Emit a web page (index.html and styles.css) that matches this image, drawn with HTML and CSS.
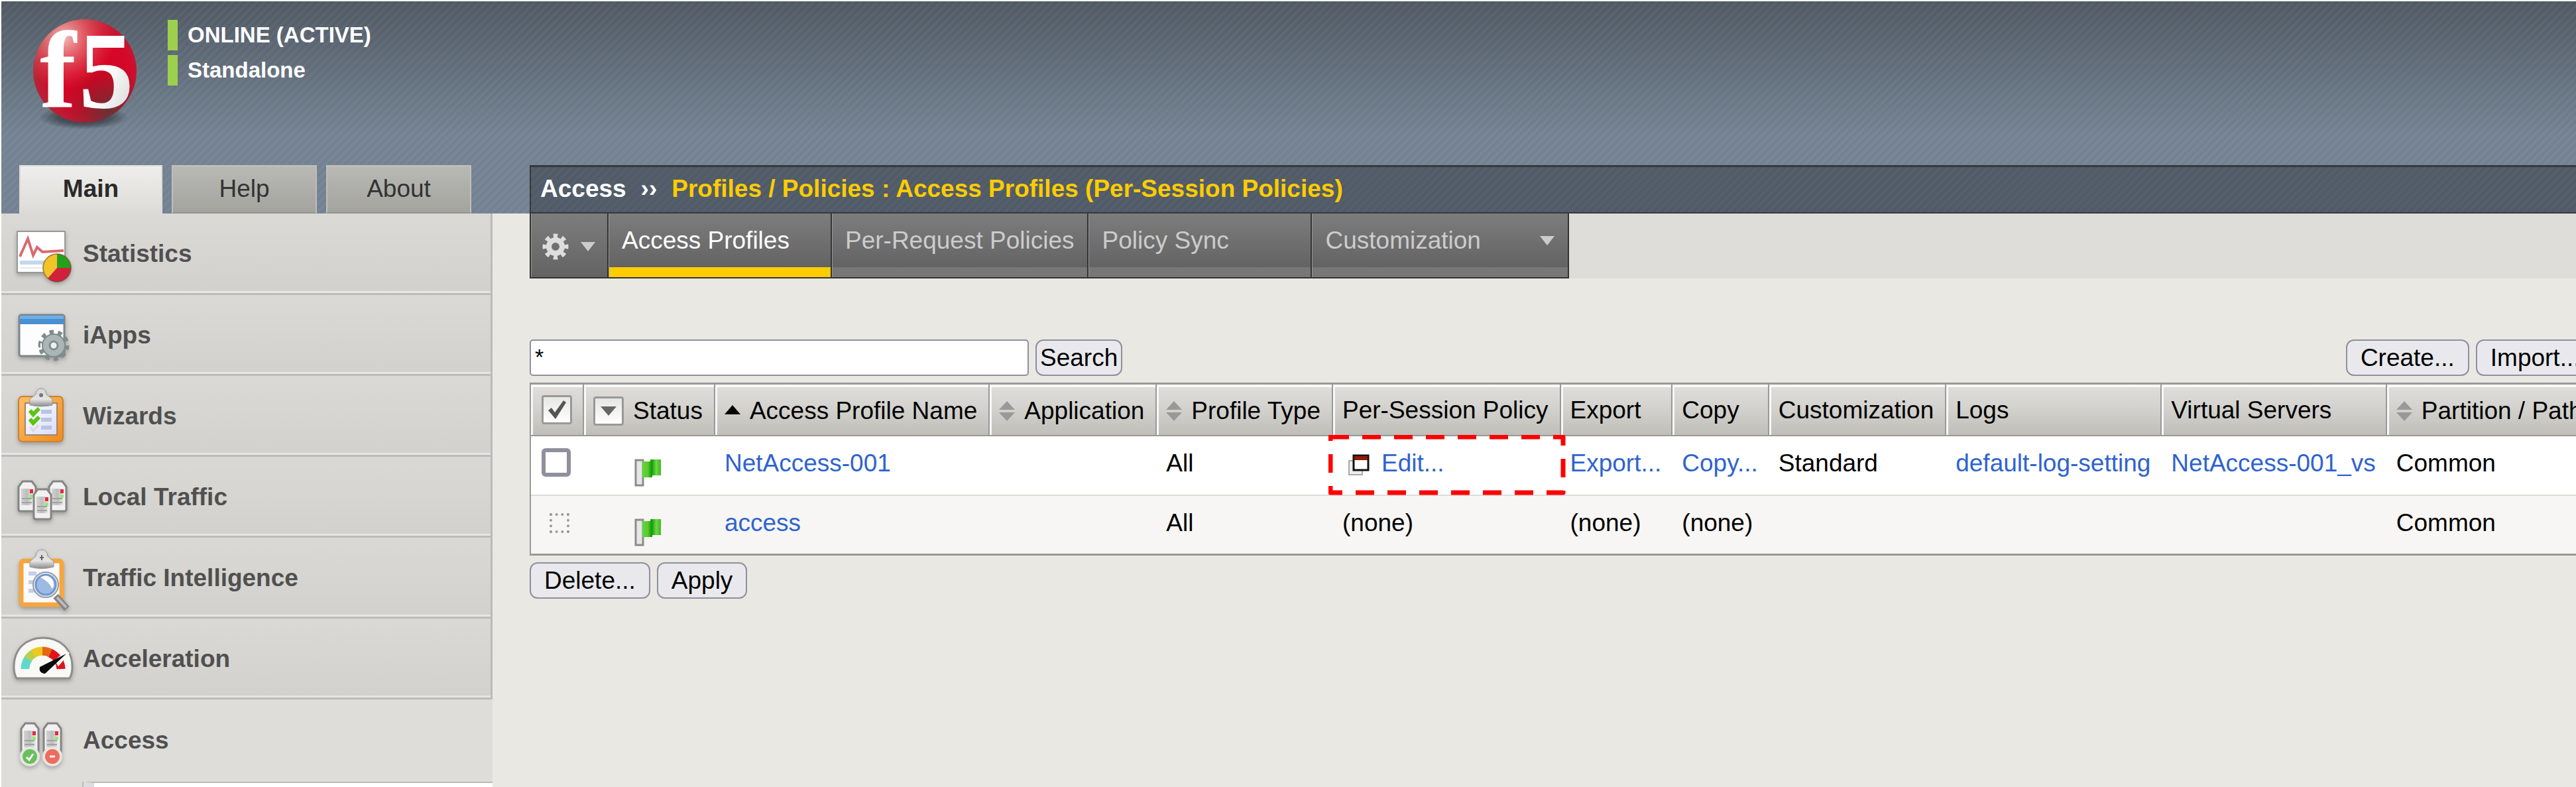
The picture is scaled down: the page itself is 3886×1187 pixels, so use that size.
FILE: index.html
```html
<!DOCTYPE html>
<html lang="en">
<head>
<meta charset="utf-8">
<title>Access Profiles</title>
<link rel="stylesheet" href="styles.css">
</head>
<body>
<svg class="defs" width="0" height="0" aria-hidden="true">
  <defs>
    <linearGradient id="metal" x1="0" y1="0" x2="1" y2="0">
      <stop offset="0" stop-color="#d2d2d2"/><stop offset=".5" stop-color="#bdbdbd"/><stop offset="1" stop-color="#ececec"/>
    </linearGradient>
    <linearGradient id="clip" x1="0" y1="0" x2="0" y2="1">
      <stop offset="0" stop-color="#d8d8d8"/><stop offset=".6" stop-color="#e4e4e4"/><stop offset="1" stop-color="#8a8a8a"/>
    </linearGradient>
    <linearGradient id="board" x1="0" y1="0" x2="1" y2="1">
      <stop offset="0" stop-color="#ffbf66"/><stop offset="1" stop-color="#f28a1c"/>
    </linearGradient>
    <linearGradient id="sheet" x1="0" y1="0" x2="1" y2="1">
      <stop offset="0" stop-color="#ffffff"/><stop offset="1" stop-color="#d9dcfa"/>
    </linearGradient>
    <linearGradient id="flagfill" x1="0" y1="0" x2="1" y2="0">
      <stop offset="0" stop-color="#5fd83a"/><stop offset=".3" stop-color="#5cc92f"/><stop offset=".5" stop-color="#0f9b0a"/><stop offset=".75" stop-color="#6fd840"/><stop offset="1" stop-color="#3fb52a"/>
    </linearGradient>
    <g id="server">
      <path d="M2 44V10L8 2h14l6 8v34q0 3-3 3H5q-3 0-3-3z" fill="#f1f1f1" stroke="#858585" stroke-width="3"/>
      <path d="M6 13h18v25H6z" fill="url(#metal)"/>
      <path d="M7 28h15M7 34h15" stroke="#a2a2a2" stroke-width="2"/>
      <path d="M19 14h5v6h-5z" fill="#e8283c"/><path d="M19 22h5v5h-5z" fill="#90ee70"/>
    </g>
    <g id="flag">
      <path d="M2 2h11v38H2z" fill="#e6e6e6" stroke="#8c8c8c" stroke-width="3"/>
      <path d="M12 4h12V1h16v24H27v3H12z" fill="url(#flagfill)"/>
    </g>
    <g id="sort">
      <path d="M12 0l12 13H0zM0 17h24L12 30z" fill="#999"/>
    </g>
  </defs>
</svg>

<header class="top">
  <div class="brand">
    <svg class="logo" width="180" height="180" viewBox="0 0 180 180" role="img" aria-label="f5">
      <defs>
        <radialGradient id="ball" cx=".55" cy=".5" r=".6" fx=".55" fy=".55">
          <stop offset="0" stop-color="#d8001f"/><stop offset=".65" stop-color="#d4082a"/><stop offset="1" stop-color="#a8303a"/>
        </radialGradient>
        <radialGradient id="shine" cx=".3" cy=".18" r=".5">
          <stop offset="0" stop-color="#f6c4be" stop-opacity=".95"/><stop offset="1" stop-color="#e05050" stop-opacity="0"/>
        </radialGradient>
        <radialGradient id="shade" cx=".72" cy=".88" r=".45">
          <stop offset="0" stop-color="#543a38" stop-opacity=".85"/><stop offset="1" stop-color="#8a2028" stop-opacity="0"/>
        </radialGradient>
        <radialGradient id="floor">
          <stop offset="0" stop-color="#222a32" stop-opacity=".9"/><stop offset=".6" stop-color="#2c353e" stop-opacity=".6"/><stop offset="1" stop-color="#333" stop-opacity="0"/>
        </radialGradient>
        <linearGradient id="ink" x1="0" y1="0" x2="1" y2="1">
          <stop offset=".5" stop-color="#fff"/><stop offset="1" stop-color="#cfcfcf"/>
        </linearGradient>
      </defs>
      <ellipse cx="90" cy="147" rx="68" ry="18" fill="url(#floor)"/>
      <circle cx="92" cy="77" r="78" fill="url(#ball)"/>
      <circle cx="92" cy="77" r="78" fill="url(#shine)"/>
      <circle cx="92" cy="77" r="78" fill="url(#shade)"/>
      <text class="logo-text" x="24" y="132">f</text>
      <text class="logo-text" x="83" y="132" fill="url(#ink)">5</text>
    </svg>
    <div class="state">
      <p>ONLINE (ACTIVE)</p>
      <p>Standalone</p>
    </div>
  </div>
  <div class="bar">
    <nav class="maintabs" aria-label="Sections">
      <a class="on" href="#main">Main</a>
      <a href="#help">Help</a>
      <a href="#about">About</a>
    </nav>
    <div class="crumbs"><a href="#access">Access</a><span>››</span><strong>Profiles / Policies : Access Profiles (Per-Session Policies)</strong></div>
  </div>
</header>

<div class="body">
  <nav class="side" aria-label="Main menu">
    <a class="item" href="#statistics">
      <svg width="96" height="100" viewBox="0 0 96 100">
        <path d="M8 16h72v62H8z" fill="#fff" stroke="#999" stroke-width="2"/>
        <path d="M12 60h66v6H12z" fill="#c3d9ec"/><path d="M12 70h60v2H12z" fill="#e2eaf2"/>
        <path d="M12 54L24 27l8 25 6-12 8 7 32-2" fill="none" stroke="#d96a70" stroke-width="4"/>
        <circle cx="68" cy="71" r="21" fill="#d0203c"/>
        <path d="M68 71V50a21 21 0 0 1 21 21z" fill="#25a01c"/>
        <path d="M68 71V50a21 21 0 0 0-14 37z" fill="#f3c32c"/>
        <circle cx="68" cy="71" r="21" fill="none" stroke="#6a4a20" stroke-opacity=".5" stroke-width="2"/>
      </svg>
      <span>Statistics</span>
    </a>
    <a class="item" href="#iapps">
      <svg width="96" height="100" viewBox="0 0 96 100">
        <rect x="11" y="19" width="68" height="62" rx="3" fill="#fdfdfe" stroke="#7d868c" stroke-width="3"/>
        <path d="M12 20h66v13H12z" fill="#4a8fd0"/><path d="M12 20h66v5H12z" fill="#6ab0ea"/>
        <circle cx="63" cy="65" r="20" fill="none" stroke="#7f8c8c" stroke-width="7" pathLength="20" stroke-dasharray="1 1"/>
        <circle cx="63" cy="65" r="17" fill="#a9b6b5" stroke="#7f8c8c" stroke-width="2"/>
        <circle cx="63" cy="65" r="6" fill="#eef0f0" stroke="#828e8e" stroke-width="3"/>
      </svg>
      <span>iApps</span>
    </a>
    <a class="item" href="#wizards">
      <svg width="96" height="100" viewBox="0 0 96 100">
        <rect x="10" y="20" width="67" height="68" rx="6" fill="url(#board)" stroke="#c98235" stroke-width="2"/>
        <path d="M20 30h48v48H20z" fill="url(#sheet)" stroke="#9a8878" stroke-width="2"/>
        <path d="M44 43h16M44 55h16M44 67h16" stroke="#b9c3e2" stroke-width="6"/>
        <path d="M27 41l5 6 9-9M27 54l5 6 9-9" fill="none" stroke="#5cc413" stroke-width="6"/>
        <path d="M28 66l4 6 8-9" fill="none" stroke="#dcdce0" stroke-width="4"/>
        <path d="M27 33v-9l9-7q1-9 8-9t8 9l9 7v9q-17 4-34 0z" fill="url(#clip)" stroke="#999" stroke-width="1"/>
        <circle cx="44" cy="18" r="3" fill="#777"/>
      </svg>
      <span>Wizards</span>
    </a>
    <a class="item" href="#local">
      <svg width="96" height="100" viewBox="0 0 96 100">
        <use href="#server" x="8" y="24"/><use href="#server" x="54" y="24"/><use href="#server" x="31" y="36"/>
      </svg>
      <span>Local Traffic</span>
    </a>
    <a class="item" href="#intelligence">
      <svg width="96" height="100" viewBox="0 0 96 100">
        <rect x="14" y="24" width="61" height="66" rx="4" fill="#fbfbfd" stroke="#f5a63f" stroke-width="7"/>
        <path d="M25 43h12M25 56h10M25 69h12" stroke="#c6cdea" stroke-width="6"/>
        <path d="M27 33v-8l9-8q1-10 9-10t9 10l9 8v8q-18 5-36 0z" fill="url(#clip)" stroke="#999" stroke-width="1"/>
        <path d="M45 15v8M42 19h6" stroke="#666" stroke-width="2"/>
        <path d="M66 77l17 19" stroke="#858585" stroke-width="10"/><path d="M68 79l14 15" stroke="#bbb" stroke-width="4"/>
        <circle cx="51" cy="60" r="19" fill="#e5e9ee" stroke="#979ca4" stroke-width="2"/>
        <circle cx="51" cy="60" r="15" fill="#9dbbe2" stroke="#6f98d0" stroke-width="3"/>
        <path d="M43 49q10-6 18 3 4 8 0 14-6-12-18-17z" fill="#fff"/>
      </svg>
      <span>Traffic Intelligence</span>
    </a>
    <a class="item" href="#acceleration">
      <svg width="96" height="100" viewBox="0 0 96 100">
        <path d="M7 79Q3 72 3 62C3 34 22 18 47 18s44 16 44 44q0 10-4 17z" fill="#f8f8f5" stroke="#8d8d8d" stroke-width="3"/>
        <path d="M20 65a27 27 0 0 1 5-16" fill="none" stroke="#62d8cd" stroke-width="13"/>
        <path d="M24 50a27 27 0 0 1 10-9" fill="none" stroke="#b8cf50" stroke-width="13"/>
        <path d="M32 42a27 27 0 0 1 16-4" fill="none" stroke="#ecc91c" stroke-width="13"/>
        <path d="M46 38a27 27 0 0 1 14 4" fill="none" stroke="#e8641a" stroke-width="13"/>
        <path d="M58 41a27 27 0 0 1 16 24" fill="none" stroke="#e0141c" stroke-width="13"/>
        <path d="M64 52l18-15 5 4-17 20z" fill="#f8f8f5"/>
        <path d="M42 62l40-20-32 30q-10-1-8-10z" fill="#0b0b0b"/>
      </svg>
      <span>Acceleration</span>
    </a>
    <a class="item open" href="#access">
      <svg width="96" height="100" viewBox="0 0 96 100">
        <use href="#server" x="12" y="22"/><use href="#server" x="46" y="22"/>
        <circle cx="27" cy="74" r="15" fill="#e6e5e1"/><circle cx="61" cy="74" r="15" fill="#e6e5e1"/>
        <circle cx="27" cy="74" r="11" fill="#68bf5c"/><circle cx="61" cy="74" r="11" fill="#ee6b60"/>
        <path d="M22 75l4 4 6-9" fill="none" stroke="#fff" stroke-width="3"/><path d="M57 74h8" stroke="#fff" stroke-width="3"/>
      </svg>
      <span>Access</span>
    </a>
    <div class="submenu"></div>
  </nav>

  <main class="content">
    <nav class="pagetabs" aria-label="Access profile pages">
      <button class="gear" type="button" aria-label="Options">
        <svg width="40" height="40" viewBox="0 0 40 40">
          <circle cx="20" cy="20" r="16" fill="none" stroke="#ddd" stroke-width="7" pathLength="16" stroke-dasharray="1 1" stroke-dashoffset=".5"/>
          <circle cx="20" cy="20" r="10" fill="none" stroke="#ddd" stroke-width="8"/>
        </svg>
        <svg width="22" height="14" viewBox="0 0 22 14"><path d="M0 0h22L11 14z" fill="#ccc"/></svg>
      </button>
      <a class="on" href="#profiles">Access Profiles</a>
      <a href="#requests">Per-Request Policies</a>
      <a href="#sync">Policy Sync</a>
      <a class="wide" href="#custom">Customization <svg width="22" height="14" viewBox="0 0 22 14"><path d="M0 0h22L11 14z" fill="#ccc"/></svg></a>
    </nav>

    <form class="list" onsubmit="return false">
      <div class="tools">
        <input class="query" type="text" value="*" aria-label="Search profiles">
        <button class="btn tight" type="submit">Search</button>
        <span class="right">
          <button class="btn" type="button">Create...</button>
          <button class="btn" type="button">Import...</button>
        </span>
      </div>
      <table class="grid">
        <thead>
          <tr>
            <th><button class="mini" type="button" aria-label="Select all"><svg width="30" height="30" viewBox="0 0 30 30"><path d="M2 16l5-4 5 7L25 1l4 3-16 25z" fill="#555"/></svg></button></th>
            <th><span class="head"><button class="mini" type="button" aria-label="Filter by status"><svg width="24" height="14" viewBox="0 0 24 14"><path d="M0 0h24L12 14z" fill="#666"/></svg></button>Status</span></th>
            <th><span class="head"><svg width="24" height="30" viewBox="0 0 24 30"><path d="M12 6l12 14H0z"/></svg>Access Profile Name</span></th>
            <th><span class="head"><svg width="24" height="30" viewBox="0 0 24 30"><use href="#sort"/></svg>Application</span></th>
            <th><span class="head"><svg width="24" height="30" viewBox="0 0 24 30"><use href="#sort"/></svg>Profile Type</span></th>
            <th>Per-Session Policy</th>
            <th>Export</th>
            <th>Copy</th>
            <th>Customization</th>
            <th>Logs</th>
            <th>Virtual Servers</th>
            <th><span class="head"><svg width="24" height="30" viewBox="0 0 24 30"><use href="#sort"/></svg>Partition / Path</span></th>
          </tr>
        </thead>
        <tbody>
          <tr>
            <td><input class="tick" type="checkbox" aria-label="Select NetAccess-001"></td>
            <td><svg class="flag" width="42" height="42" viewBox="0 0 42 42"><use href="#flag"/></svg></td>
            <td><a href="#netaccess">NetAccess-001</a></td>
            <td></td>
            <td>All</td>
            <td class="marked">
              <svg class="window" width="32" height="32" viewBox="0 0 32 32"><path d="M1 10h20v21H1z" fill="#eee" stroke="#aaa" stroke-width="2"/><path d="M8 2h22v22H8z" fill="#fff" stroke="#111" stroke-width="3"/><path d="M9 3h20v6H9z" fill="#8e1a08"/></svg><a href="#edit">Edit...</a>
              <svg class="outline" width="358" height="91" viewBox="0 0 358 91"><rect x="3" y="3" width="351" height="84" fill="none" stroke="#f00" stroke-width="7" stroke-linejoin="round" stroke-dasharray="28 20"/></svg>
            </td>
            <td><a href="#export">Export...</a></td>
            <td><a href="#copy">Copy...</a></td>
            <td>Standard</td>
            <td><a href="#log">default-log-setting</a></td>
            <td><a href="#vs">NetAccess-001_vs</a></td>
            <td>Common</td>
          </tr>
          <tr>
            <td><input class="tick" type="checkbox" aria-label="Select access" disabled></td>
            <td><svg class="flag" width="42" height="42" viewBox="0 0 42 42"><use href="#flag"/></svg></td>
            <td><a href="#access-profile">access</a></td>
            <td></td>
            <td>All</td>
            <td>(none)</td>
            <td>(none)</td>
            <td>(none)</td>
            <td></td>
            <td></td>
            <td></td>
            <td>Common</td>
          </tr>
        </tbody>
      </table>
      <div class="actions">
        <button class="btn" type="button">Delete...</button>
        <button class="btn" type="button">Apply</button>
      </div>
    </form>
  </main>
</div>
</body>
</html>
```
FILE: styles.css
```css
* { box-sizing: border-box; }

html { background: #fff; }

body {
  margin: 0;
  padding: 2px 0 0 2px;
  min-height: 100vh;
  display: flex;
  flex-direction: column;
  overflow: hidden;
  background: #fff;
  font: 37px/42px "Liberation Sans", Arial, sans-serif;
  color: #000;
}

a { color: #2f63cf; text-decoration: none; }
p { margin: 0; }
svg { flex: none; }
button, input { font: inherit; color: inherit; margin: 0; }
.defs { position: absolute; }

/* header */
.top {
  background:
    linear-gradient(135deg, #ffffff09 25%, #0000 25% 50%, #ffffff09 50% 75%, #0000 75%) 0 0 / 12px 12px,
    linear-gradient(#505963, #738292 200px);
}
.brand {
  display: flex;
  align-items: flex-start;
  min-height: 247px;
  padding: 28px 0 0 34px;
}
.logo { margin-right: 37px; overflow: visible; }
.logo-text { font: bold 165px "Liberation Serif", serif; fill: #fff; }
.logo-text[fill] { fill: url(#ink); }
.state { display: grid; gap: 7px; }
.state p {
  border-left: 15px solid #9ed04f;
  padding: 2px 0 2px 15px;
  font-size: 33px;
  font-weight: bold;
  color: #fff;
}

.bar { display: grid; grid-template-columns: 741px 1fr; }
.maintabs { display: flex; gap: 14px; padding-left: 27px; }
.maintabs a {
  width: 219px;
  height: 73px;
  padding-top: 13px;
  text-align: center;
  color: #333;
  background: linear-gradient(#b9b9b5, #a3a49e);
  border: 2px solid #bfbfbb;
  border-bottom-color: #93948f;
}
.maintabs .on {
  width: 216px;
  font-weight: bold;
  color: #2a2a2a;
  background: linear-gradient(#efeeec, #dcdbd7);
  border-color: #dddcd8;
  border-bottom: 0;
}
.crumbs {
  margin-left: 56px;
  padding: 12px 14px;
  display: flex;
  white-space: nowrap;
  gap: 22px;
  font-weight: bold;
  color: #fff;
  background: linear-gradient(135deg, #ffffff06 25%, #0000 25% 50%, #ffffff06 50% 75%, #0000 75%) 0 0 / 12px 12px, #505b67;
  border: solid #36383a;
  border-width: 3px 0 2px 2px;
}
.crumbs a { color: #fff; }
.crumbs strong { color: #fc0; }

.body { flex: 1; display: grid; grid-template-columns: 741px minmax(0, 1fr); }

/* side menu */
.side { display: flex; flex-direction: column; background: #dedddA; }
.item {
  display: flex;
  align-items: center;
  gap: 11px;
  height: 122px;
  padding: 2px 0 0 16px;
  font-weight: bold;
  color: #505050;
  background: linear-gradient(#dad9d5, #d2d1cd);
  border-right: 3px solid #bbb;
  border-bottom: 3px solid #bbb;
  box-shadow: inset 0 -3px #e6e5e1;
}
.item:first-child { height: 123px; }
.item svg { filter: drop-shadow(0 3px 3px #0004); }
.item.open { background: none; border-color: transparent; box-shadow: none; height: 124px; }
.submenu {
  flex: 1;
  min-height: 8px;
  margin-left: 124px;
  background: #fff;
  border-top: 2px solid #bbb;
  border-left: 16px solid #dddddf;
  box-shadow: -2px 0 #bbb;
}

/* page tabs */
.content { background: #e9e8e3; padding-left: 56px; overflow: hidden; }
.pagetabs { display: flex; background: #dedddA; }
.pagetabs a, .gear {
  min-width: 337px;
  height: 98px;
  padding: 20px 20px 0;
  color: #ccc;
  background: linear-gradient(#7d7d7d, #636363 81px, #777 81px);
  border: solid #333;
  border-width: 0 2px 2px 0;
  box-shadow: inset 1px 0 #999;
}
.pagetabs .on {
  color: #fff;
  background: linear-gradient(#7d7d7d, #636363 81px, #fc0 81px);
}
.pagetabs .wide { min-width: 388px; display: flex; justify-content: space-between; }
.wide svg { margin-top: 14px; }
.gear {
  min-width: 119px;
  display: flex;
  align-items: center;
  gap: 18px;
  padding: 4px 0 0 17px;
  background: linear-gradient(#7d7d7d, #636363);
  border-width: 0 2px 2px 2px;
}

/* list */
.list { width: max-content; padding-top: 92px; }
.tools { display: flex; gap: 10px; margin-bottom: 10px; }
.query {
  width: 753px;
  height: 55px;
  padding: 0 6px 2px;
  font-size: 34px;
  background: #fff;
  border: 2px solid #8f8f9d;
  border-radius: 5px;
}
.right { display: flex; gap: 10px; margin-left: auto; }
.btn {
  height: 55px;
  padding: 0 20px;
  background: #e9e9ed;
  border: 2px solid #8f8f9d;
  border-radius: 12px;
}
.btn.tight { padding: 0 5px; }

.grid {
  border-collapse: separate;
  border-spacing: 0;
  border: solid #999;
  border-width: 3px 0 3px 2px;
  white-space: nowrap;
}
.grid th {
  height: 78px;
  padding: 2px 17px 0 14px;
  text-align: left;
  font-weight: normal;
  background: linear-gradient(#dfdeda, #d5d4d0 40%, #bfbeb9);
  border: solid #999;
  border-width: 0 2px 2px 0;
  box-shadow: inset 3px 4px #f8f8f6;
}
.grid td {
  height: 90px;
  padding: 20px 17px 26px 14px;
  vertical-align: top;
  background: #fff;
  border-bottom: 2px solid #dddcd8;
}
.grid tr:last-child td { height: 87px; padding-bottom: 25px; background: #f7f6f4; border-bottom: 0; }
.grid th:first-child, .grid td:first-child { padding: 0 16px; }
.head { display: flex; align-items: center; gap: 14px; padding-top: 1px; }
.mini {
  display: grid;
  place-items: center;
  width: 46px;
  height: 44px;
  padding: 0;
  background: linear-gradient(#e6e6e3, #fff);
  border: 3px solid #999;
  border-radius: 4px;
}
.tick {
  display: block;
  appearance: none;
  width: 44px;
  height: 43px;
  margin-top: 18px;
  background: #fff;
  border: 6px solid #8f8f9d;
  border-radius: 6px;
}
.tick:disabled {
  width: 30px;
  height: 30px;
  margin: 26px 0 0 12px;
  background: none;
  border: 4px dotted #999;
  border-radius: 0;
}
.flag { display: block; margin: 14px 0 -16px 62px; }
.window { vertical-align: middle; margin: 0 18px 0 9px; }
.marked { position: relative; }
.outline { position: absolute; left: -7px; top: -2px; }

.actions { display: flex; gap: 10px; margin-top: 10px; }
```
